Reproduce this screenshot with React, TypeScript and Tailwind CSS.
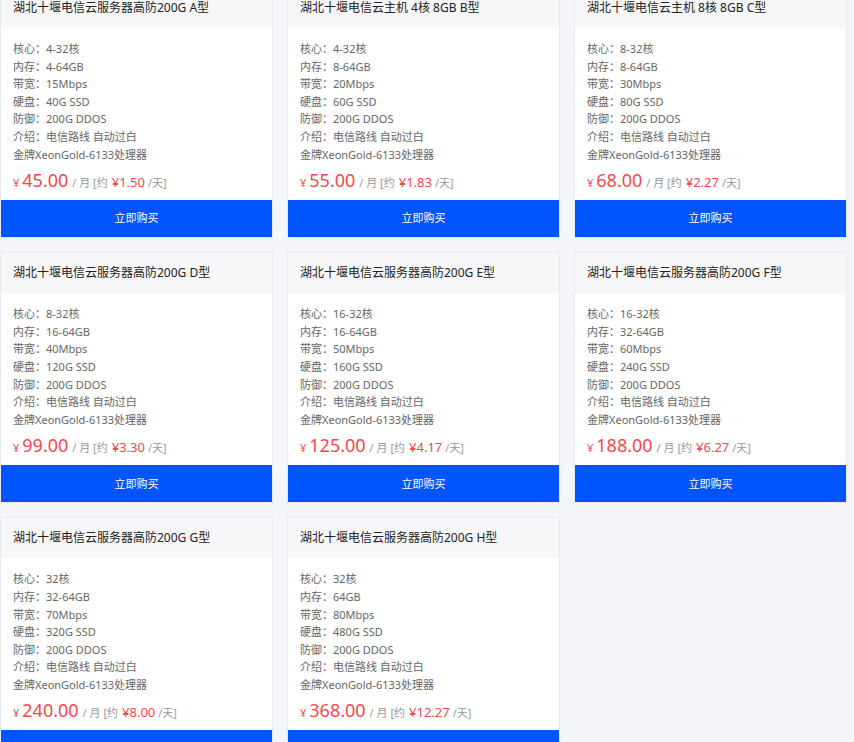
const plans = [
  { name: "湖北十堰电信云服务器高防200G A型", core: "4-32核", mem: "4-64GB", bw: "15Mbps", disk: "40G SSD", price: "45.00", day: "1.50" },
  { name: "湖北十堰电信云主机 4核 8GB B型", core: "4-32核", mem: "8-64GB", bw: "20Mbps", disk: "60G SSD", price: "55.00", day: "1.83" },
  { name: "湖北十堰电信云主机 8核 8GB C型", core: "8-32核", mem: "8-64GB", bw: "30Mbps", disk: "80G SSD", price: "68.00", day: "2.27" },
  { name: "湖北十堰电信云服务器高防200G D型", core: "8-32核", mem: "16-64GB", bw: "40Mbps", disk: "120G SSD", price: "99.00", day: "3.30" },
  { name: "湖北十堰电信云服务器高防200G E型", core: "16-32核", mem: "16-64GB", bw: "50Mbps", disk: "160G SSD", price: "125.00", day: "4.17" },
  { name: "湖北十堰电信云服务器高防200G F型", core: "16-32核", mem: "32-64GB", bw: "60Mbps", disk: "240G SSD", price: "188.00", day: "6.27" },
  { name: "湖北十堰电信云服务器高防200G G型", core: "32核", mem: "32-64GB", bw: "70Mbps", disk: "320G SSD", price: "240.00", day: "8.00" },
  { name: "湖北十堰电信云服务器高防200G H型", core: "32核", mem: "64GB", bw: "80Mbps", disk: "480G SSD", price: "368.00", day: "12.27" },
];

type Plan = (typeof plans)[number];

function PlanCard({ plan }: { plan: Plan }) {
  const specs = [
    `核心：${plan.core}`,
    `内存：${plan.mem}`,
    `带宽：${plan.bw}`,
    `硬盘：${plan.disk}`,
    "防御：200G DDOS",
    "介绍：电信路线 自动过白",
    "金牌XeonGold-6133处理器",
  ];

  return (
    <div className="flex flex-col border border-[#e8e9ee] bg-white">
      {/* Header */}
      <div className="flex h-[40px] items-center bg-[#f7f7f9] px-[12px] text-[12px] text-[#222]">
        {plan.name}
      </div>

      {/* Specs */}
      <div className="px-[12px] pt-[12px] pb-[9px]">
        <ul className="text-[11px] leading-[17.6px] text-[#666]">
          {specs.map((s) => (
            <li key={s}>{s}</li>
          ))}
        </ul>
        <div className="mt-[4px] flex h-[24px] items-baseline whitespace-nowrap">
          <span className="mr-[3px] text-[11px] text-[#f5484b]">¥</span>
          <span className="text-[18px] text-[#f5484b]">{plan.price}</span>
          <span className="ml-[4px] text-[11px] text-[#999]">/ 月 [约</span>
          <span className="ml-[4px] text-[13px] text-[#f5484b]">¥{plan.day}</span>
          <span className="ml-[3px] text-[11px] text-[#999]">/天]</span>
        </div>
      </div>

      {/* Button */}
      <button className="h-[37px] w-full bg-[#0055ff] text-[11px] text-white">立即购买</button>
    </div>
  );
}

export default function App() {
  return (
    <div
      className="h-[742px] overflow-hidden bg-[#f4f5f9]"
      style={{ fontFamily: '"Noto Sans", "Noto Sans CJK SC", sans-serif' }}
    >
      <div className="-mt-[13px] grid grid-cols-[273px_273px_273px] gap-[14px]">
        {plans.map((p) => (
          <PlanCard key={p.name} plan={p} />
        ))}
      </div>
    </div>
  );
}
